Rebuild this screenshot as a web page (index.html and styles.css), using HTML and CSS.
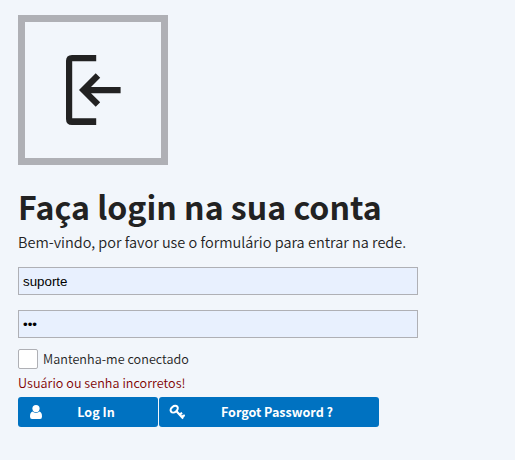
FILE: index.html
```html
<!DOCTYPE html>
<html lang="pt-BR">
<head>
<meta charset="utf-8">
<title>Login</title>
<link rel="stylesheet" href="styles.css">
</head>
<body>
<main class="login">
  <div class="logo">
    <svg viewBox="0 0 136 136" width="136" height="136" aria-hidden="true">
      <path d="M71.2 33H47Q41 33 41 39V97Q41 103 47 103H71.2V96.3H47.2V39.3H71.2Z" fill="#222"/>
      <path d="M54 68L70.7 51.3L75.2 55.7L66 64.9H95.6V71.3H66L75.2 80.3L70.7 84.8Z" fill="#222"/>
    </svg>
  </div>
  <h1 class="title">Faça login na sua conta</h1>
  <p class="intro">Bem-vindo, por favor use o formulário para entrar na rede.</p>
  <form class="form">
    <input class="field" type="text" value="suporte" aria-label="Usuário">
    <input class="field" type="password" value="abc" aria-label="Senha">
    <label class="remember"><input class="check" type="checkbox"><span class="remember-text">Mantenha-me conectado</span></label>
    <p class="error">Usuário ou senha incorretos!</p>
    <div class="actions">
      <button class="btn btn-login" type="button">
        <svg class="icon" viewBox="0 0 16 16" width="16" height="16" aria-hidden="true"><circle cx="8" cy="4.6" r="3.6" fill="#fff"/><path d="M4.4 7.6Q8 10.5 11.6 7.6Q14 8.5 14 12.5Q14 15 12 15H4Q2 15 2 12.5Q2 8.5 4.4 7.6Z" fill="#fff"/></svg>
        <span class="label">Log In</span>
      </button>
      <button class="btn btn-forgot" type="button">
        <svg class="icon" viewBox="0 0 16 16" width="16" height="16" aria-hidden="true"><g fill="none" stroke="#fff" stroke-width="2"><ellipse cx="5.2" cy="5.2" rx="4" ry="2.9" transform="rotate(-38 5.2 5.2)"/><path stroke-width="2.2" d="M7.5 7.3L14.2 14.6M12.6 12.8L15.8 11.2M10.4 10.4L13.2 9"/></g></svg>
        <span class="label">Forgot Password ?</span>
      </button>
    </div>
  </form>
</main>
</body>
</html>
```
FILE: styles.css
```css
* { box-sizing: border-box; }
body {
  margin: 0;
  background: #f2f6fb;
  color: #222;
  font-family: "Noto Sans CJK SC", "Noto Sans", sans-serif;
}
.login { padding: 15px 18px; white-space: nowrap; }
.logo { width: 150px; height: 150px; border: 7px solid #afb0b5; }
.logo svg { display: block; }
.title { margin: 18px 0 0; font-size: 32.1px; line-height: 46px; font-weight: 700; }
.intro { margin: 1px 0 0; font-size: 14.5px; line-height: 24px; font-weight: 350; }
.form { display: flex; flex-direction: column; align-items: flex-start; margin-top: 13px; }
.field {
  width: 400px;
  height: 28px;
  margin: 0 0 15px;
  padding: 1px 4px;
  border: 1px solid #afb0b5;
  background: #e8f0fe;
  color: #000;
  font: 13.33px "Liberation Sans", sans-serif;
}
.field[type="password"] { margin-bottom: 11px; }
.remember { display: flex; align-items: center; gap: 5px; height: 20px; font-size: 12.6px; font-weight: 350; }
.remember-text { padding-bottom: 2px; letter-spacing: 0.04px; }
.check {
  appearance: none;
  width: 20px;
  height: 20px;
  margin: 0;
  border: 1px solid #afb0b5;
  border-radius: 2px;
  background: #fff;
}
.error { margin: 4px 0 0; font-size: 12.6px; line-height: 20px; font-weight: 350; letter-spacing: 0.04px; color: #800000; }
.actions { display: flex; gap: 1px; margin-top: 4px; }
.btn {
  display: flex;
  align-items: center;
  height: 30px;
  padding: 0 10px;
  border: 0;
  border-radius: 3px;
  background: #0072c1;
  color: #fff;
  font: 700 12.55px "Noto Sans CJK SC", "Noto Sans", sans-serif;
}
.btn-login { width: 140px; }
.btn-forgot { width: 220px; }
.label { flex: 1; padding-bottom: 2px; text-align: center; }
```
